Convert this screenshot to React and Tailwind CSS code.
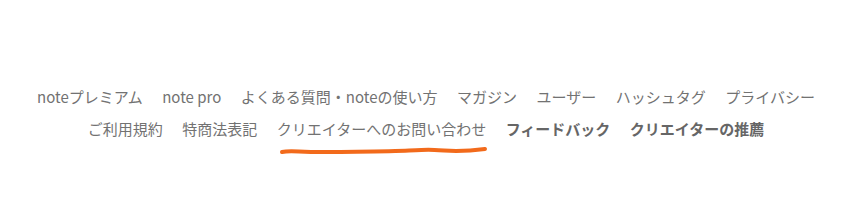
import React from "react";

const LINKS = [
  { label: "noteプレミアム" },
  { label: "note pro" },
  { label: "よくある質問・noteの使い方" },
  { label: "マガジン" },
  { label: "ユーザー" },
  { label: "ハッシュタグ" },
  { label: "プライバシー" },
  { label: "ご利用規約" },
  { label: "特商法表記" },
  { label: "クリエイターへのお問い合わせ", marked: true },
  { label: "フィードバック", bold: true },
  { label: "クリエイターの推薦", bold: true },
];

const Scribble = () => (
  <svg
    className="absolute left-[2px] top-[31px] pointer-events-none"
    width="210"
    height="12"
    viewBox="0 0 210 12"
    fill="none"
  >
    <path
      d="M3 8 C 12 6, 20 8.5, 50 8 S 110 7.5, 130 6.5 S 150 5.5, 165 6.5 S 190 7, 206 5"
      stroke="#f26a1b"
      strokeWidth="4"
      strokeLinecap="round"
    />
  </svg>
);

export default function App() {
  return (
    <footer
      className="w-full h-[222px] bg-white pt-[81px] pr-[10px]"
      style={{ fontFamily: '"Noto Sans CJK JP", "Noto Sans", sans-serif' }}
    >
      <ul className="mx-auto w-[800px] flex flex-wrap justify-center gap-x-[19.5px] text-[15px] leading-8 text-[#727272]">
        {LINKS.map((link, i) => (
          <li key={i} className="relative">
            <a
              href="#"
              className={link.bold ? "font-bold text-[#666]" : ""}
            >
              {link.label}
            </a>
            {link.marked && <Scribble />}
          </li>
        ))}
      </ul>
    </footer>
  );
}
